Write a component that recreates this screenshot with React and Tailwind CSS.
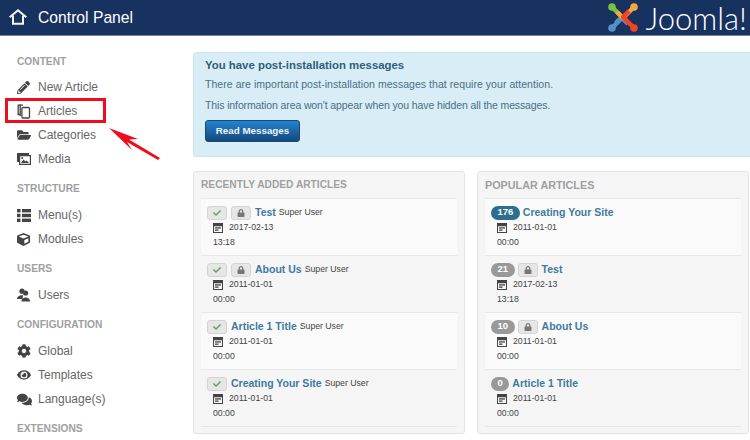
import {
  FaPencilAlt,
  FaFolderOpen,
  FaCube,
  FaCog,
  FaEye,
  FaComments,
  FaLock,
  FaCheck,
} from "react-icons/fa";

function HomeIcon() {
  return (
    <svg className="shrink-0" width="18" height="16" viewBox="0 0 18 16" fill="none" stroke="#f2f5f8" strokeWidth="2">
      <path d="M0.7 8.300L9 1.300l8.300 7" />
      <path d="M4 6.500V14.800H14V6.500" />
    </svg>
  );
}

function CopyIcon() {
  return (
    <svg width="14" height="15" viewBox="0 0 14 15" fill="none" stroke="currentColor" strokeWidth="1.300">
      <path d="M4 1.200H1.200V10.500H3" />
      <path d="M6 1.200H3.200V12" />
      <rect x="4.900" y="3.500" width="7.600" height="10.500" rx="1" />
    </svg>
  );
}

function MediaIcon() {
  return (
    <svg width="14" height="12" viewBox="0 0 14 12">
      <path fill="currentColor" d="M0 0h12v2H2v7H0z" />
      <path fill="currentColor" fillRule="evenodd" d="M2 2h12v10H2zM3.200 3.200v7.600h9.600V3.200z" />
      <path fill="currentColor" d="M4 10l2.500-3.500 2 2 1.200-1 2.300 2.500z" />
      <circle cx="5.200" cy="5" r="1" fill="currentColor" />
    </svg>
  );
}

function MenuIcon() {
  return (
    <svg width="14" height="13" viewBox="0 0 14 13" fill="currentColor">
      <rect x="0" y="0" width="3.500" height="3.400" />
      <rect x="5" y="0" width="9" height="3.400" />
      <rect x="0" y="4.800" width="3.500" height="3.400" />
      <rect x="5" y="4.800" width="9" height="3.400" />
      <rect x="0" y="9.600" width="3.500" height="3.400" />
      <rect x="5" y="9.600" width="9" height="3.400" />
    </svg>
  );
}

function UsersIcon() {
  return (
    <svg width="14" height="14" viewBox="0 0 14 14" fill="currentColor">
      <circle cx="5" cy="3.200" r="2.600" />
      <path d="M0 11c0-2.400 2-3.400 3.600-3.800h2.600L5.400 11z" />
      <circle cx="8.600" cy="5" r="2.600" />
      <path d="M4.400 13.400c0-2.600 2-3.800 4.200-3.800s4.400 1.200 4.400 3.800z" />
    </svg>
  );
}

function CalendarIcon() {
  return (
    <svg width="10" height="10" viewBox="0 0 10 10" fill="currentColor">
      <path fillRule="evenodd" d="M0 0h10v10H0zM1 3.200V9h8V3.200z" />
      <rect x="2" y="4.300" width="6" height="1.300" />
      <rect x="2" y="6.500" width="3.500" height="1.300" />
    </svg>
  );
}

function JoomlaMark() {
  return (
    <svg className="shrink-0" width="30" height="29" viewBox="0 0 30 29" fill="none" strokeWidth="4.500" strokeLinejoin="round">
      <path stroke="#7ac143" d="M4 4l10 10-6 6" />
      <circle cx="4" cy="4" r="3.800" fill="#7ac143" />
      <path stroke="#5091cd" d="M4 25l10-10 6 6" />
      <circle cx="4" cy="25" r="3.800" fill="#5091cd" />
      <path stroke="#f9a541" d="M26 4L15 15 9 9" />
      <circle cx="26" cy="4" r="3.800" fill="#f9a541" />
      <path stroke="#f44321" d="M26 25L15 14l6-6" />
      <circle cx="26" cy="25" r="3.800" fill="#f44321" />
    </svg>
  );
}

function Header() {
  return (
    <header className="h-9 bg-[#17325f] border-b border-[#6d84a6] flex items-center justify-between pl-[9px] pr-[3px] text-white">
      <div className="flex items-center">
        <HomeIcon />
        <span className="ml-[11px] text-[15.7px]">Control Panel</span>
      </div>
      <div className="flex items-center">
        <JoomlaMark />
        <span className="ml-[7px] text-[31px] leading-[32px] font-light font-['Lato'] whitespace-nowrap">Joomla!</span>
      </div>
    </header>
  );
}

function SideHeading({ children, first }) {
  return (
    <div className={`h-[22px] flex items-center font-bold text-[10.2px] text-[#a0a0a0] ${first ? "mt-[8px] mb-[2px]" : "mt-[7px] mb-[3px]"}`}>
      {children}
    </div>
  );
}

function SideItem({ icon, children }) {
  return (
    <div className="h-6 flex items-center text-[12px] text-[#666]">
      <span className="w-[21px] flex items-center text-[#444]">{icon}</span>
      {children}
    </div>
  );
}

function Sidebar() {
  return (
    <aside className="w-[193px] shrink-0 pl-[17px] pt-[7px]">
      <SideHeading first>CONTENT</SideHeading>
      <SideItem icon={<FaPencilAlt size={13} />}>New Article</SideItem>
      <SideItem icon={<CopyIcon />}>Articles</SideItem>
      <SideItem icon={<FaFolderOpen size={14} />}>Categories</SideItem>
      <SideItem icon={<MediaIcon />}>Media</SideItem>
      <SideHeading>STRUCTURE</SideHeading>
      <SideItem icon={<MenuIcon />}>Menu(s)</SideItem>
      <SideItem icon={<FaCube size={13} />}>Modules</SideItem>
      <SideHeading>USERS</SideHeading>
      <SideItem icon={<UsersIcon />}>Users</SideItem>
      <SideHeading>CONFIGURATION</SideHeading>
      <SideItem icon={<FaCog size={14} />}>Global</SideItem>
      <SideItem icon={<FaEye size={14} />}>Templates</SideItem>
      <SideItem icon={<FaComments size={15} />}>Language(s)</SideItem>
      <SideHeading>EXTENSIONS</SideHeading>
    </aside>
  );
}

function StatusButton({ type }) {
  return (
    <span className="w-[20px] h-[14px] mr-[4px] flex items-center justify-center rounded-[3px] border border-[#d4d4d4] bg-[#e6e6e6]">
      {type === "check" ? (
        <FaCheck size={8} className="text-[#5fa75f]" />
      ) : (
        <FaLock size={8} className="text-[#777]" />
      )}
    </span>
  );
}

function Hits({ count, hot }) {
  return (
    <span
      className={`h-[14px] mr-[3px] px-[6.500px] flex items-center rounded-full text-white font-bold text-[9.500px] ${
        hot ? "bg-[#2d6d8e]" : "bg-[#999]"
      }`}
    >
      {count}
    </span>
  );
}

function ArticleRow({ title, author, date, time, buttons, hits, hot, striped }) {
  return (
    <div className={`h-[57px] border-b border-[#e7e7e7] pl-[6px] pt-[6px] ${striped ? "bg-[#fafafa]" : ""}`}>
      <div className="h-[15px] flex items-center">
        {hits != null && <Hits count={hits} hot={hot} />}
        {buttons.map((b) => (
          <StatusButton key={b} type={b} />
        ))}
        <span className="font-bold text-[10.500px] text-[#3f7a9e]">{title}</span>
        {author && <span className="ml-[3px] text-[8.700px] text-[#444]">{author}</span>}
      </div>
      <div className="mt-[1px] h-[14px] pl-[6px] flex items-center text-[8.700px] text-[#444]">
        <CalendarIcon />
        <span className="ml-[6px]">{date}</span>
      </div>
      <div className="mt-[1px] h-[14px] pl-[6px] flex items-center text-[8.700px] text-[#444]">{time}</div>
    </div>
  );
}

function Well({ title, size, children }) {
  return (
    <section className="flex-1 h-[263px] rounded-[3px] border border-[#e3e3e3] bg-[#f5f5f5] px-[7px]">
      <h2 className={`h-[27px] flex items-center font-bold text-[#a0a0a0] border-b border-[#e7e7e7] ${size}`}>
        {title}
      </h2>
      {children}
    </section>
  );
}

const recent = [
  { title: "Test", date: "2017-02-13", time: "13:18", buttons: ["check", "lock"] },
  { title: "About Us", date: "2011-01-01", time: "00:00", buttons: ["check", "lock"] },
  { title: "Article 1 Title", date: "2011-01-01", time: "00:00", buttons: ["check"] },
  { title: "Creating Your Site", date: "2011-01-01", time: "00:00", buttons: ["check"] },
];

const popular = [
  { title: "Creating Your Site", date: "2011-01-01", time: "00:00", buttons: [], hits: 176, hot: true },
  { title: "Test", date: "2017-02-13", time: "13:18", buttons: ["lock"], hits: 21 },
  { title: "About Us", date: "2011-01-01", time: "00:00", buttons: ["lock"], hits: 10 },
  { title: "Article 1 Title", date: "2011-01-01", time: "00:00", buttons: [], hits: 0 },
];

export default function App() {
  return (
    <div className="relative w-[750px] h-[440px] overflow-hidden bg-white font-['Liberation_Sans',sans-serif]">
      <Header />
      <div className="flex">
        <Sidebar />
        <main className="flex-1 pt-4">
          <div className="h-[105px] rounded-l-[4px] border border-r-0 border-[#c5e8f0] bg-[#d9edf7] pl-[11px] pt-[6px] text-[#4a6f82]">
            <h1 className="h-[14px] flex items-center font-bold text-[11.400px] text-[#2f5f78]">You have post-installation messages</h1>
            <p className="mt-[5px] h-[14px] flex items-center text-[10.500px] tracking-[0.05px]">There are important post-installation messages that require your attention.</p>
            <p className="mt-[7px] h-[14px] flex items-center text-[10.500px] tracking-[-0.12px]">This information area won't appear when you have hidden all the messages.</p>
            <button className="mt-[7px] h-[22px] w-[95px] rounded-[3px] border border-[#124a78] bg-gradient-to-b from-[#2384d3] to-[#15497c] text-[#eef4f9] font-bold text-[9.800px]">
              Read Messages
            </button>
          </div>
          <div className="mt-[14px] flex gap-[12px] pr-[1px]">
            <Well title="RECENTLY ADDED ARTICLES" size="text-[10.200px]">
              {recent.map((a, i) => (
                <ArticleRow key={a.title} {...a} author="Super User" striped={i % 2 === 0} />
              ))}
            </Well>
            <Well title="POPULAR ARTICLES" size="text-[10.800px]">
              {popular.map((a, i) => (
                <ArticleRow key={a.title} {...a} striped={i % 2 === 0} />
              ))}
            </Well>
          </div>
        </main>
      </div>

      {/* annotation over the screenshot */}
      <div className="absolute left-[5px] top-[98px] w-[101px] h-[25px] border-[3px] border-[#ee0d1c]" />
      <svg className="absolute left-[105px] top-[124px]" width="60" height="42" viewBox="0 0 60 42" fill="#ee0d1c">
        <path d="M4 4L33 15 24 15.500 55 34 53 36 22 18 27 26z" />
      </svg>
    </div>
  );
}
